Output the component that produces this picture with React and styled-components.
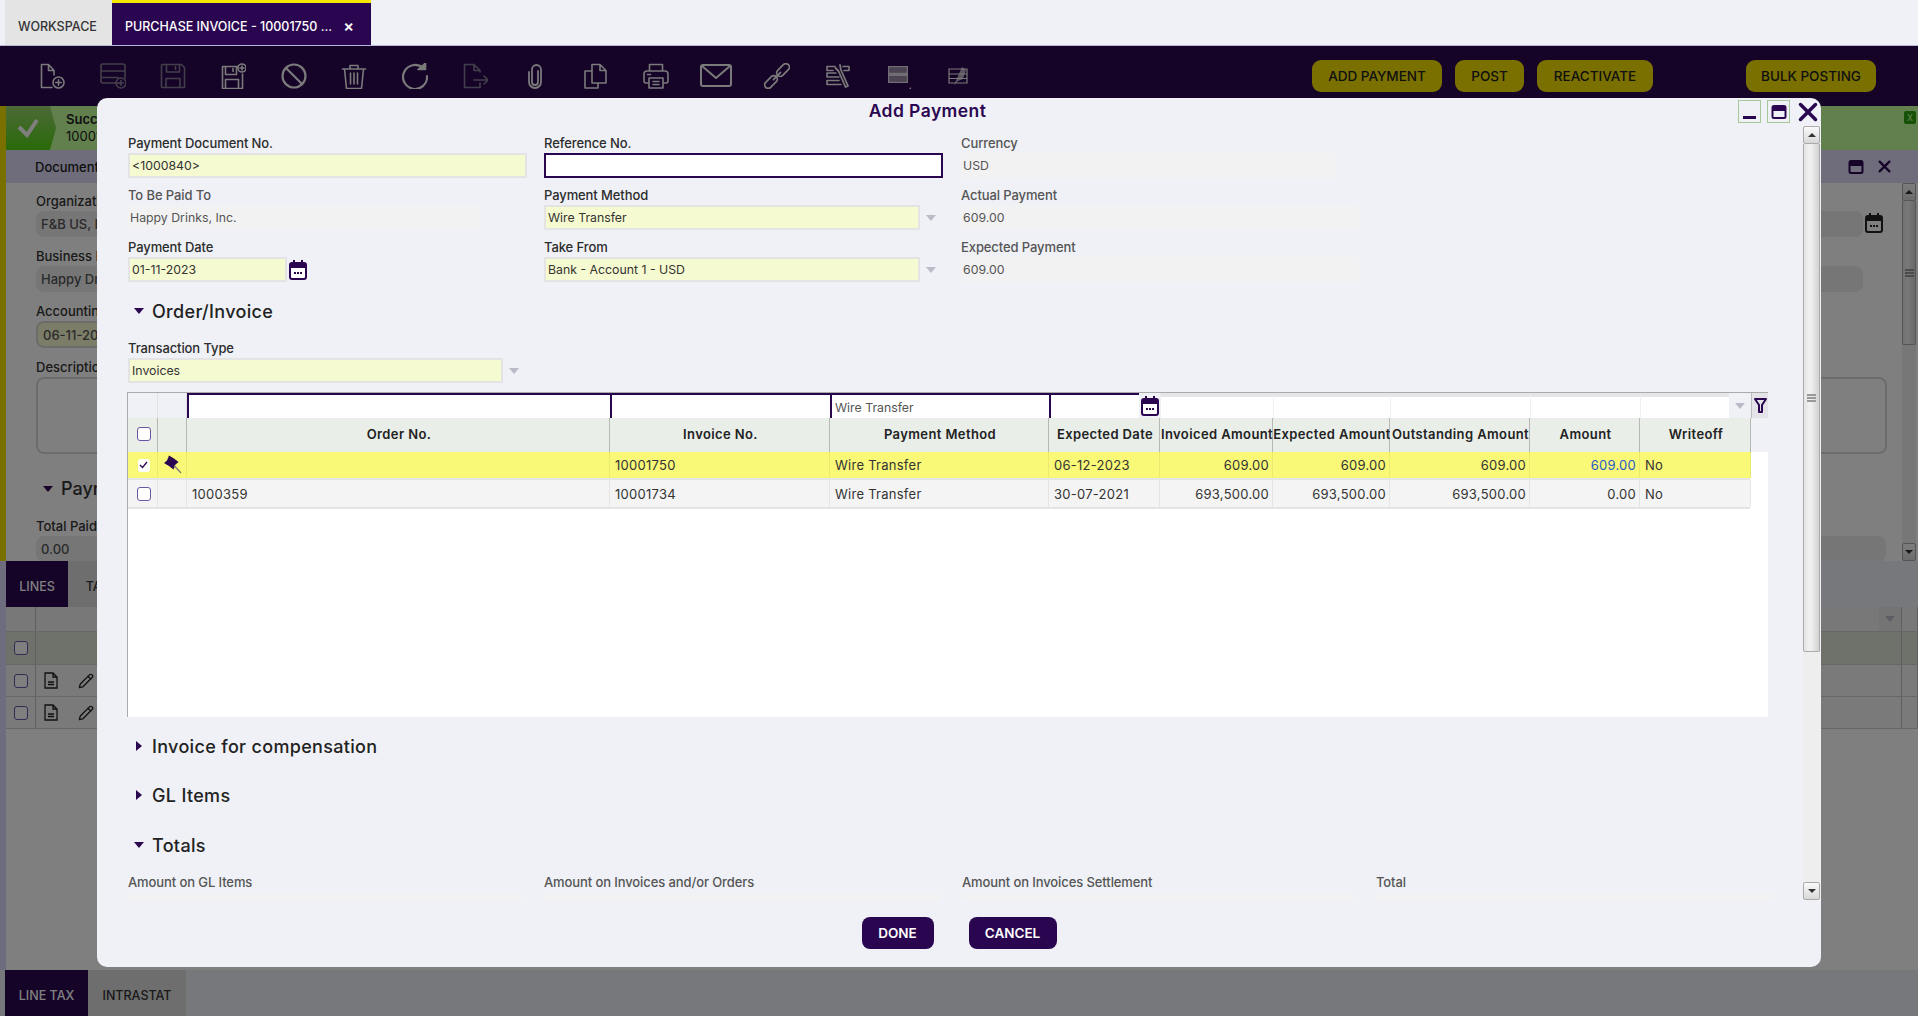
import React from 'react'
import styled, { createGlobalStyle } from 'styled-components'
import { Pencil } from 'lucide-react'

const GlobalStyle = createGlobalStyle`
    html, body {
        margin: 0;
        padding: 0;
        background: #eff1f6;
    }
    * {
        box-sizing: border-box;
    }
    body {
        font-family: Inter, "Noto Sans", "Liberation Sans", sans-serif;
        font-size: 13px;
        color: #333;
    }
`

const PURPLE = '#2b0650'
const GRID_COLS = '30px 29px 423px 220px 219px 111px 113px 117px 140px 110px 111px'
const FILTER_COLS = '30px 29px 423px 220px 219px 90px 21px 113px 117px 140px 110px 89px 22px 17px'

const Shell = styled.div`
    position: relative;
    width: 1918px;
    height: 1016px;
    overflow: hidden;
    display: flex;
    flex-direction: column;
`
const TabBar = styled.div`
    height: 46px;
    padding-left: 5px;
    display: flex;
    border-bottom: 1px solid #b9b7d6;
`
const TopTab = styled.div`
    height: 45px;
    display: flex;
    align-items: center;
    font-size: 12.5px;
    font-weight: 500;
    white-space: nowrap;
    padding: ${p => (p.$active ? '4px' : '7px')} 0 0 13px;
    width: ${p => (p.$active ? '259px' : '107px')};
    background: ${p => (p.$active ? PURPLE : '#e4e4e4')};
    color: ${p => (p.$active ? '#fff' : '#333')};
    border-top: ${p => (p.$active ? '3px solid #f5e700' : 'none')};
`
const TabClose = styled.span`
    margin-left: auto;
    padding-right: 17px;
    font-size: 16px;
    font-weight: 600;
`
const Dimmed = styled.div`
    position: relative;
    flex: 1;
    display: flex;
    flex-direction: column;
    min-height: 0;
`
const Overlay = styled.div`
    position: absolute;
    inset: 0;
    background: rgba(0, 0, 0, 0.5);
`
const Toolbar = styled.div`
    height: 60px;
    background: ${PURPLE};
    padding: 0 42px 0 22px;
    display: flex;
    align-items: center;
`
const ToolCell = styled.div`
    width: 60.4px;
    display: flex;
    justify-content: center;
    color: ${p => (p.$off ? '#857f96' : '#f4f4f4')};
`
const ToolGroup = styled.div`
    margin-left: auto;
    display: flex;
    gap: 13px;
`
const ActionBtn = styled.div`
    height: 32px;
    width: ${p => p.$w}px;
    border-radius: 9px;
    background: #f5e000;
    color: #222;
    font-size: 13.5px;
    font-weight: 500;
    display: flex;
    align-items: center;
    justify-content: center;
    margin-left: ${p => p.$gap || 0}px;
`

/* page behind the popup */
const TopPanel = styled.div`
    height: 455px;
    display: flex;
    background: #fff;
`
const Stripe = styled.div`
    width: 6px;
    background: #f5e000;
`
const PanelCol = styled.div`
    flex: 1;
    min-width: 0;
    display: flex;
    flex-direction: column;
`
const Message = styled.div`
    height: 44px;
    display: flex;
    background: #c4ff9c;
    font-size: 13px;
    line-height: 17px;
    color: #222;
`
const MessageIcon = styled.div`
    width: 50px;
    display: flex;
    align-items: center;
    justify-content: center;
    padding-right: 6px;
    background: linear-gradient(#9ad46f, #54d414);
    clip-path: polygon(0 0, 88% 0, 100% 50%, 88% 100%, 0 100%);
`
const MessageText = styled.div`
    padding: 5px 0 0 10px;
    b {
        font-weight: 600;
    }
`
const MessageClose = styled.div`
    margin: 5px 2px 0 auto;
    width: 12px;
    height: 13px;
    background: #2ea30c;
    border-radius: 2px;
    color: #c4ff9c;
    font-size: 11px;
    line-height: 13px;
    text-align: center;
`
const DocHeader = styled.div`
    height: 33px;
    padding: 0 27px 0 29px;
    background: #dfd9f8;
    display: flex;
    align-items: center;
    font-weight: 500;
    color: #222;
    gap: 13px;
`
const DocTitle = styled.span`
    flex: 1;
`
const DocIcon = styled.span`
    display: inline-flex;
    color: ${PURPLE};
`
const DocBody = styled.div`
    flex: 1;
    display: flex;
    min-height: 0;
    overflow: hidden;
`
const DocForm = styled.div`
    flex: 1;
    min-width: 0;
    padding: 9px 0 0 30px;
    font-weight: 500;
`
const DocLabel = styled.div`
    height: 19px;
    line-height: 19px;
`
const DocRow = styled.div`
    display: flex;
    align-items: flex-start;
`
const DocField = styled.div`
    height: ${p => p.$h || 26}px;
    margin-bottom: 10px;
    padding: 0 5px;
    display: flex;
    align-items: center;
    flex: none;
    width: ${p => p.$w}px;
    border-radius: 8px;
    color: #555;
    background: ${p => (p.$plain ? '#fff' : p.$req ? '#f6fad0' : '#ececec')};
    border: ${p => (p.$plain || p.$req ? '2px solid #d8d8d8' : 'none')};
`
const DocCal = styled.span`
    display: inline-flex;
    margin: 2px 0 0 2px;
    color: #222;
`
const DocSection = styled.div`
    font-size: 18px;
    margin: 24px 0 18px 7px;
    display: flex;
    align-items: center;
    gap: 0;
`
const Filler = styled.div`
    flex: 1;
    background: #fff;
    display: flex;
    flex-direction: column;
    border-left: 6px solid #dcd9ff;
`
const SubTabs = styled.div`
    height: 46px;
    flex: none;
    display: flex;
    background: #eff1f6;
`
const SubTab = styled.div`
    width: ${p => p.$w}px;
    margin-left: ${p => p.$ml || 0}px;
    padding-top: 5px;
    display: flex;
    align-items: center;
    justify-content: center;
    font-weight: 500;
    font-size: 12.5px;
    color: ${p => (p.$active ? '#fff' : '#333')};
    background: ${p => (p.$active ? PURPLE : '#dddddd')};
`
const BgRow = styled.div`
    height: ${p => p.$h}px;
    display: flex;
    background: ${p => p.$bg};
    border-bottom: 1px solid #cfcfcf;
`
const BgCell = styled.div`
    width: ${p => p.$w || 30}px;
    flex: ${p => (p.$grow ? 1 : 'none')};
    border-right: 1px solid #bfbfbf;
    display: flex;
    align-items: center;
    justify-content: ${p => (p.$start ? 'flex-start' : 'center')};
    gap: 20px;
    padding-left: ${p => (p.$start ? '8px' : '0')};
    color: ${PURPLE};
    font-weight: 600;
`
const BgArrow = styled.div`
    width: 22px;
    align-self: stretch;
    flex: none;
    background: #e8e8e8;
    display: flex;
    align-items: center;
    justify-content: center;
`
const BgFill = styled.div`
    flex: 1;
    text-align: center;
`

/* popup */
const Modal = styled.div`
    position: absolute;
    left: 97px;
    top: 98px;
    width: 1724px;
    height: 869px;
    background: #eff1f6;
    border-radius: 10px;
    display: flex;
    flex-direction: column;
`
const TitleBar = styled.div`
    height: 28px;
    flex: none;
    display: flex;
    padding: 2px 3px 0 26px;
`
const Title = styled.div`
    flex: 1;
    text-align: center;
    font-size: 17.5px;
    line-height: 22px;
    font-weight: 600;
    color: ${PURPLE};
    letter-spacing: 0.025em;
`
const WinBtn = styled.div`
    width: ${p => (p.$bare ? '20px' : '23px')};
    height: 23px;
    margin-left: ${p => (p.$bare ? '8px' : '6px')};
    border: ${p => (p.$bare ? 'none' : '1px solid #a5c79a')};
    color: ${PURPLE};
    display: flex;
    align-items: center;
    justify-content: center;
`
const Middle = styled.div`
    height: 774px;
    flex: none;
    display: flex;
`
const Content = styled.div`
    flex: 1;
    min-width: 0;
    overflow: hidden;
    padding: 9px 0 0 31px;
`
const FormGrid = styled.div`
    display: grid;
    grid-template-columns: 399px 400px 1fr;
    column-gap: 17px;
    row-gap: 9px;
`
const FieldBox = styled.div`
    display: flex;
    flex-direction: column;
    height: 43px;
    margin-top: ${p => p.$mt || 0}px;
`
const Label = styled.div`
    height: 18px;
    line-height: 16px;
    font-size: 13px;
    font-weight: 500;
    letter-spacing: -0.1px;
    color: ${p => (p.$muted ? '#555' : '#2c2c2c')};
    white-space: nowrap;
`
const InputRow = styled.div`
    display: flex;
    align-items: center;
`
const Field = styled.div`
    height: 25px;
    width: ${p => (p.$w ? `${p.$w}px` : '100%')};
    flex: none;
    padding: 0 2px;
    display: flex;
    align-items: center;
    font-size: 12.3px;
    white-space: nowrap;
    ${p =>
        p.$kind === 'focus'
            ? `background: #fff; border: 2px solid ${PURPLE};`
            : p.$kind === 'read'
            ? 'background: #f2f2f2; color: #555; padding-left: 2px;'
            : 'background: #f6fad0; border: 2px solid #e4e4e4; color: #333;'}
`
const SelectArrow = styled.span`
    width: 0;
    height: 0;
    margin-left: ${p => p.$ml ?? 6}px;
    border-left: 5px solid transparent;
    border-right: 5px solid transparent;
    border-top: 6px solid #b9bcc6;
`
const CalWrap = styled.span`
    margin-left: 2px;
    display: inline-flex;
    color: ${PURPLE};
`
const SectionHead = styled.div`
    height: 28px;
    display: flex;
    align-items: center;
    margin-top: ${p => p.$mt || 0}px;
    padding-left: 6px;
    font-size: 18px;
    font-weight: 500;
    color: #222;
    letter-spacing: 0.018em;
`
const Toggle = styled.span`
    width: 0;
    height: 0;
    flex: none;
    margin-right: ${p => (p.$open ? '8px' : '10px')};
    ${p =>
        p.$open
            ? `border-left: 5px solid transparent; border-right: 5px solid transparent; border-top: 6px solid ${PURPLE};`
            : `margin-left: 2px; border-top: 5px solid transparent; border-bottom: 5px solid transparent; border-left: 6px solid ${PURPLE};`}
`
const GridBox = styled.div`
    width: 1641px;
    height: 325px;
    margin: 9px 0 0 -1px;
    background: #fff;
    border-top: 1px solid #aaa;
    border-left: 1px solid #aaa;
`
const FilterRow = styled.div`
    height: 25px;
    display: grid;
    grid-template-columns: ${FILTER_COLS};
    background: #eff1f6;
`
const FilterCell = styled.div`
    background: #fff;
    padding: 1px 0 0 3px;
    display: flex;
    align-items: center;
    color: #555;
    font-size: 12.3px;
    border-top: ${p => (p.$on ? `2px solid ${PURPLE}` : '4px solid #e6e6ea')};
    border-left: ${p => (p.$on ? `2px solid ${PURPLE}` : '1px solid #eff1f6')};
`
const BlankCell = styled.div`
    background: #eff1f6;
    border-right: 1px solid #e2e2e2;
`
const FilterSide = styled.div`
    display: flex;
    align-items: center;
    justify-content: center;
    color: ${PURPLE};
`
const FilterBtn = styled.div`
    display: flex;
    align-items: center;
    justify-content: center;
    background: #e4e4e8;
    color: ${PURPLE};
    border-left: 1px solid #bbb;
`
const HeadWrap = styled.div`
    height: 34px;
    background: #eff1f6;
    display: grid;
    grid-template-columns: ${GRID_COLS};
`
const HeadCell = styled.div`
    background: #e9eee9;
    border-right: 1px solid #b5b8b5;
    padding: 0 0 2px 2px;
    display: flex;
    align-items: center;
    justify-content: center;
    font-size: 13px;
    font-weight: 600;
    color: #222;
    white-space: nowrap;
    letter-spacing: 0.03em;
`
const Row = styled.div`
    height: ${p => p.$h}px;
    display: grid;
    grid-template-columns: ${GRID_COLS};
    background: ${p => (p.$sel ? '#f9f877' : '#f4f4f4')};
    width: 1622px;
    border-bottom: 2px solid #e4e4e4;
`
const Cell = styled.div`
    border-right: 1px solid ${p => (p.$sel ? '#eaea70' : '#e4e4e4')};
    display: flex;
    align-items: center;
    justify-content: ${p => (p.$right ? 'flex-end' : p.$center ? 'center' : 'flex-start')};
    padding: 0 3px 0 5px;
    font-size: 13px;
    letter-spacing: 0.02em;
    color: ${p => p.$color || '#333'};
`
const Check = styled.span`
    width: ${p => (p.$on ? 12 : 14)}px;
    height: ${p => (p.$on ? 13 : 14)}px;
    border-radius: 3px;
    background: #fff;
    border: ${p => (p.$on ? 'none' : '1px solid #6a55a8')};
    display: inline-flex;
    align-items: center;
    justify-content: center;
    color: ${PURPLE};
`
const TotalsGrid = styled.div`
    display: grid;
    grid-template-columns: 394px 396px 392px 398px;
    column-gap: 22px;
    margin-top: 15px;
`
const TotalField = styled.div`
    height: 20px;
    margin-top: 2px;
    background: #f2f2f2;
`
const Scrollbar = styled.div`
    width: ${p => p.$w || 17}px;
    margin-right: ${p => p.$mr ?? 1}px;
    flex: none;
    display: flex;
    flex-direction: column;
    background: #eeeeee;
`
const ScrollBtn = styled.div`
    height: 18px;
    flex: none;
    border: 1px solid #aaa;
    border-radius: 2px;
    background: linear-gradient(#fafafa, #d8d8d8);
    display: flex;
    align-items: center;
    justify-content: center;
    margin-top: ${p => (p.$bottom ? 'auto' : 0)};
`
const ScrollTri = styled.span`
    width: 0;
    height: 0;
    border-left: 4px solid transparent;
    border-right: 4px solid transparent;
    ${p => (p.$down ? 'border-top: 4px solid #333;' : 'border-bottom: 4px solid #333;')}
`
const Thumb = styled.div`
    height: ${p => p.$h}px;
    flex: none;
    border: 1px solid #aaa;
    border-top: none;
    border-radius: 0 0 2px 2px;
    background: linear-gradient(90deg, #e4e4e4, #f2f2f2 40%, #d2d2d2);
    display: flex;
    flex-direction: column;
    gap: 1px;
    align-items: center;
    padding-top: ${p => p.$grip}px;
`
const Grip = styled.span`
    width: 9px;
    height: 2px;
    background: #999;
`
const Footer = styled.div`
    flex: 1;
    display: flex;
    justify-content: center;
    align-items: flex-start;
    gap: 35px;
    padding-top: 17px;
`
const DarkBtn = styled.div`
    height: 32px;
    width: ${p => p.$w}px;
    border-radius: 8px;
    background: ${PURPLE};
    color: #fff;
    font-size: 13.5px;
    font-weight: 600;
    display: flex;
    align-items: center;
    justify-content: center;
`

const Svg = ({ size = 26, children }) => (
    <svg width={size} height={size} viewBox="0 0 26 26" fill="none" stroke="currentColor" strokeWidth="1.6" strokeLinecap="round" strokeLinejoin="round">
        {children}
    </svg>
)

const Plus = ({ x, y, r }) => (
    <>
        <circle cx={x} cy={y} r={r} />
        <path d={`M${x - r / 2} ${y}h${r}M${x} ${y - r / 2}v${r}`} />
    </>
)

const TOOLS = [
    { key: 'new', icon: <Svg><path d="M15 12V7.5L9.5 1.5H2.5V24.5H13M9.5 1.5V7.5H15" /><Plus x={19.5} y={19.5} r={5.5} /></Svg> },
    { key: 'newline', off: true, icon: <Svg><path d="M19 20H3a2 2 0 0 1-2-2V3a2 2 0 0 1 2-2h20a2 2 0 0 1 2 2v12M1 8h24M1 14.5h17" /><Plus x={21} y={20} r={5} /></Svg> },
    { key: 'save', off: true, icon: <Svg><path d="M2.5 1.5h19l3 3v20h-22a1 1 0 0 1-1-1v-21a1 1 0 0 1 1-1zM6.5 1.5v7.5h13v-7.5M6 24.5v-9h14v9M15.5 3.5v3" /></Svg> },
    { key: 'savenew', icon: <Svg><path d="M18 3.5H2.5v22h20V11M5.5 3.5v8h11v-8M5.5 25.5v-9h13v9M13 5.5v3" /><Plus x={22} y={5} r={4} /></Svg> },
    { key: 'ban', icon: <Svg><circle cx="13" cy="13" r="11.5" strokeWidth="2.2" /><path d="M5 5l16 16" strokeWidth="2.2" /></Svg> },
    { key: 'trash', icon: <Svg><path d="M1.5 6h23M9 6V2.5h8V6M3.5 6l2 19.5h15l2-19.5M9.5 10v11M13 10v11M16.5 10v11" /></Svg> },
    { key: 'refresh', icon: <Svg><path d="M21 5A12 12 0 1 0 25 13" strokeWidth="2.2" /><path d="M16 6.5h7.5V0z" fill="currentColor" /></Svg> },
    { key: 'export', off: true, icon: <Svg><path d="M18 9V7.5L12 1.5H2.5V24.5H18V20M12 1.5V7.5H18M12 17h14M22 13l4 4-4 4" /></Svg> },
    { key: 'attach', icon: <Svg><path d="M7 9v10a6 6 0 0 0 12 0V6.5a4.5 4.5 0 0 0-9 0V19a3 3 0 0 0 6 0V8" strokeWidth="1.8" /></Svg> },
    { key: 'copy', icon: <Svg><path d="M9 8H2v17h13v-5M9 1.5h8l6 6v12.5H9zM17 1.5v6h6" /></Svg> },
    { key: 'print', icon: <Svg><path d="M6.5 8V1.5h13V8M6 20H3a2 2 0 0 1-2-2v-7a3 3 0 0 1 3-3h18a3 3 0 0 1 3 3v7a2 2 0 0 1-2 2h-3M6 15h14v10H6zM10 18.5h6M10 21.5h6M4.5 11.5h3" /></Svg> },
    { key: 'mail', icon: <svg width="32" height="26" viewBox="0 0 32 26" fill="none" stroke="currentColor" strokeWidth="2" strokeLinejoin="round"><rect x="1" y="2" width="30" height="21" rx="2" /><path d="M2 3l14 12L30 3" /></svg> },
    { key: 'link', icon: (
        <Svg>
            <g transform="rotate(-45 13 13)" strokeWidth="1.8">
                <rect x="-3" y="9.5" width="15" height="7" rx="3.5" />
                <rect x="14" y="9.5" width="15" height="7" rx="3.5" />
                <path d="M8 13h10" />
            </g>
        </Svg>
    ) },
    { key: 'tools', icon: <Svg><path d="M3 3.5h8M3 7.5h6M3 10h9M3 14h12M3 17.5h12M3 21.5h14M3 3.5v4M3 10v4M3 17.5v4M19 3.5h6v4h-5" /><path d="M16 2l1 5 7 16-2.5 1-7-16-3-3" strokeWidth="1.8" /></Svg> },
    { key: 'rows', icon: <svg width="26" height="26" viewBox="0 0 26 26" fill="currentColor"><path d="M3 3h20v17H3zM4.5 4.5v5h17v-5zM4.5 13v5.5h17V13z" fillRule="evenodd" opacity="0.9" /><path d="M4.5 4.5h17v5h-17zM4.5 13h17v5.5h-17z" opacity="0.55" /><path d="M24 26h2v-2z" /></svg> },
    { key: 'slash', icon: <svg width="24" height="24" viewBox="0 0 24 24" fill="none" stroke="currentColor" strokeWidth="1.2"><path d="M3 5h18v14H3zM3 10h18M3 14.5h18" /><path d="M16 3l-8 18 4-4 5-2 3-9z" fill="currentColor" stroke="none" opacity="0.7" /></svg> },
]

const Calendar = ({ size = 20 }) => (
    <svg width={size * 0.9} height={size} viewBox="0 0 18 20" fill="none">
        <rect x="1" y="3" width="16" height="16" rx="2" fill="#fff" stroke="currentColor" strokeWidth="2" />
        <path d="M1 3h16v5H1z M4 0h2v3H4z M12 0h2v3h-2z" fill="currentColor" />
        <path d="M5 12h2v2H5zM8 12h2v2H8zM11 12h2v2h-2z" fill="currentColor" />
    </svg>
)

const Funnel = () => (
    <svg width="13" height="15" viewBox="0 0 13 15" fill="none" stroke="currentColor" strokeWidth="2" strokeLinejoin="round">
        <path d="M1 1h11L8 7v7H5V7z" />
    </svg>
)

const Pin = () => (
    <svg width="20" height="20" viewBox="0 0 20 20" fill="none">
        <path d="M6 0.5L11 3.5L15.5 7L12.5 9.5L10.5 14.5L6 11L1 8L4 5.5Z" fill={PURPLE} />
        <path d="M11 10.5l7 7.5" stroke="#777" strokeWidth="1.2" />
    </svg>
)

const FileIcon = () => (
    <svg width="14" height="17" viewBox="0 0 14 17" fill="none" stroke="#222" strokeWidth="1.3">
        <path d="M1 1h8l4 4v11H1zM9 1v4h4M4 10h6M4 12.5h6" />
    </svg>
)

const Minimize = () => <svg width="18" height="18" viewBox="0 0 18 18"><rect x="2" y="13" width="13" height="3" fill="currentColor" /></svg>
const Maximize = () => (
    <svg width="18" height="18" viewBox="0 0 18 18" fill="none">
        <rect x="2.5" y="3" width="13" height="12" rx="1.5" stroke="currentColor" strokeWidth="2" />
        <rect x="2.5" y="3" width="13" height="5" fill="currentColor" />
    </svg>
)
const CloseX = ({ size = 20 }) => (
    <svg width={size} height={size} viewBox="0 0 20 20" stroke="currentColor" strokeWidth="3.5" strokeLinecap="round">
        <path d="M2.5 2.5l15 15M17.5 2.5l-15 15" />
    </svg>
)

const COLUMNS = ['Order No.', 'Invoice No.', 'Payment Method', 'Expected Date', 'Invoiced Amount', 'Expected Amount', 'Outstanding Amount', 'Amount', 'Writeoff']

const ROWS = [
    { id: 1, sel: true, h: 28, order: '', invoice: '10001750', date: '06-12-2023', invoiced: '609.00', expected: '609.00', outstanding: '609.00', amount: '609.00' },
    { id: 2, sel: false, h: 29, order: '1000359', invoice: '10001734', date: '30-07-2021', invoiced: '693,500.00', expected: '693,500.00', outstanding: '693,500.00', amount: '0.00' },
]

const PaymentGrid = () => (
    <GridBox>
        <FilterRow>
            <BlankCell />
            <BlankCell />
            <FilterCell $on />
            <FilterCell $on />
            <FilterCell $on>Wire Transfer</FilterCell>
            <FilterCell $on />
            <FilterSide><Calendar /></FilterSide>
            <FilterCell />
            <FilterCell />
            <FilterCell />
            <FilterCell />
            <FilterCell />
            <FilterSide><SelectArrow $ml={0} /></FilterSide>
            <FilterBtn><Funnel /></FilterBtn>
        </FilterRow>
        <HeadWrap>
            <HeadCell><Check /></HeadCell>
            <HeadCell />
            {COLUMNS.map(c => <HeadCell key={c}>{c}</HeadCell>)}
        </HeadWrap>
        {ROWS.map(r => (
            <Row key={r.id} $sel={r.sel} $h={r.h}>
                <Cell $sel={r.sel} $center>
                    <Check $on={r.sel}>
                        {r.sel && (
                            <svg width="9" height="8" viewBox="0 0 9 8" fill="none" stroke="currentColor" strokeWidth="1.3"><path d="M1 4l2.5 2.5L8 1" /></svg>
                        )}
                    </Check>
                </Cell>
                <Cell $sel={r.sel} $center>{r.sel && <Pin />}</Cell>
                <Cell $sel={r.sel}>{r.order}</Cell>
                <Cell $sel={r.sel}>{r.invoice}</Cell>
                <Cell $sel={r.sel}>Wire Transfer</Cell>
                <Cell $sel={r.sel}>{r.date}</Cell>
                <Cell $sel={r.sel} $right>{r.invoiced}</Cell>
                <Cell $sel={r.sel} $right>{r.expected}</Cell>
                <Cell $sel={r.sel} $right>{r.outstanding}</Cell>
                <Cell $sel={r.sel} $right $color={r.sel ? '#2a5bc7' : undefined}>{r.amount}</Cell>
                <Cell $sel={r.sel}>No</Cell>
            </Row>
        ))}
    </GridBox>
)

const PaymentForm = () => (
    <FormGrid>
        <FieldBox>
            <Label>Payment Document No.</Label>
            <Field>&lt;1000840&gt;</Field>
        </FieldBox>
        <FieldBox>
            <Label>Reference No.</Label>
            <Field $kind="focus" $w={399} />
        </FieldBox>
        <FieldBox>
            <Label $muted>Currency</Label>
            <Field $kind="read" $w={374}>USD</Field>
        </FieldBox>
        <FieldBox>
            <Label $muted>To Be Paid To</Label>
            <Field $kind="read" $w={352}>Happy Drinks, Inc.</Field>
        </FieldBox>
        <FieldBox>
            <Label>Payment Method</Label>
            <InputRow>
                <Field $w={376}>Wire Transfer</Field>
                <SelectArrow />
            </InputRow>
        </FieldBox>
        <FieldBox>
            <Label $muted>Actual Payment</Label>
            <Field $kind="read" $w={398}>609.00</Field>
        </FieldBox>
        <FieldBox>
            <Label>Payment Date</Label>
            <InputRow>
                <Field $w={159}>01-11-2023</Field>
                <CalWrap><Calendar /></CalWrap>
            </InputRow>
        </FieldBox>
        <FieldBox>
            <Label>Take From</Label>
            <InputRow>
                <Field $w={376}>Bank - Account 1 - USD</Field>
                <SelectArrow />
            </InputRow>
        </FieldBox>
        <FieldBox>
            <Label $muted>Expected Payment</Label>
            <Field $kind="read" $w={398}>609.00</Field>
        </FieldBox>
    </FormGrid>
)

const PaymentPopup = () => (
    <Modal>
        <TitleBar>
            <Title>Add Payment</Title>
            <WinBtn><Minimize /></WinBtn>
            <WinBtn><Maximize /></WinBtn>
            <WinBtn $bare><CloseX /></WinBtn>
        </TitleBar>
        <Middle>
            <Content>
                <PaymentForm />
                <SectionHead $mt={15}><Toggle $open />Order/Invoice</SectionHead>
                <FieldBox $mt={15}>
                    <Label>Transaction Type</Label>
                    <InputRow>
                        <Field $w={375}>Invoices</Field>
                        <SelectArrow />
                    </InputRow>
                </FieldBox>
                <PaymentGrid />
                <SectionHead $mt={15}><Toggle />Invoice for compensation</SectionHead>
                <SectionHead $mt={21}><Toggle />GL Items</SectionHead>
                <SectionHead $mt={22}><Toggle $open />Totals</SectionHead>
                <TotalsGrid>
                    <div><Label $muted>Amount on GL Items</Label><TotalField /></div>
                    <div><Label $muted>Amount on Invoices and/or Orders</Label><TotalField /></div>
                    <div><Label $muted>Amount on Invoices Settlement</Label><TotalField /></div>
                    <div><Label $muted>Total</Label><TotalField /></div>
                </TotalsGrid>
            </Content>
            <Scrollbar>
                <ScrollBtn><ScrollTri /></ScrollBtn>
                <Thumb $h={508} $grip={250}><Grip /><Grip /><Grip /></Thumb>
                <ScrollBtn $bottom><ScrollTri $down /></ScrollBtn>
            </Scrollbar>
        </Middle>
        <Footer>
            <DarkBtn $w={72}>DONE</DarkBtn>
            <DarkBtn $w={88}>CANCEL</DarkBtn>
        </Footer>
    </Modal>
)

const Backdrop = () => (
    <>
        <TopPanel>
            <Stripe />
            <PanelCol>
                <Message>
                    <MessageIcon>
                        <svg width="22" height="20" viewBox="0 0 22 20" fill="none" stroke="#ffffff" strokeWidth="4"><path d="M2 9l8 8L20 2" /></svg>
                    </MessageIcon>
                    <MessageText><b>Success</b><br />10001750</MessageText>
                    <MessageClose>x</MessageClose>
                </Message>
                <DocHeader>
                    <DocTitle>Document</DocTitle>
                    <DocIcon><Maximize /></DocIcon>
                    <DocIcon><CloseX size={13} /></DocIcon>
                </DocHeader>
                <DocBody>
                    <DocForm>
                        <DocLabel>Organization</DocLabel>
                        <DocRow>
                            <DocField $w={1827}>F&amp;B US, Inc.</DocField>
                            <DocCal><Calendar /></DocCal>
                        </DocRow>
                        <DocLabel>Business Partner</DocLabel>
                        <DocField $w={1827}>Happy Drinks, Inc.</DocField>
                        <DocLabel>Accounting Date</DocLabel>
                        <DocField $req $w={300} $h={27}>06-11-2023</DocField>
                        <DocLabel>Description</DocLabel>
                        <DocField $plain $w={1851} $h={77} />
                        <DocSection><Toggle $open />Payment</DocSection>
                        <DocLabel>Total Paid</DocLabel>
                        <DocField $w={1850} $h={26}>0.00</DocField>
                    </DocForm>
                    <Scrollbar $w={14} $mr={2}>
                        <ScrollBtn><ScrollTri /></ScrollBtn>
                        <Thumb $h={144} $grip={68}><Grip /><Grip /><Grip /></Thumb>
                        <ScrollBtn $bottom><ScrollTri $down /></ScrollBtn>
                    </Scrollbar>
                </DocBody>
            </PanelCol>
        </TopPanel>
        <Filler>
            <SubTabs>
                <SubTab $active $w={62}>LINES</SubTab>
                <SubTab $w={60}>TAX</SubTab>
            </SubTabs>
            <BgRow $h={25} $bg="#f0f0f0">
                <BgCell />
                <BgCell $grow $w={1850}><BgFill>2</BgFill><BgArrow><SelectArrow $ml={0} /></BgArrow></BgCell>
                <BgCell $w={16} />
            </BgRow>
            <BgRow $h={33} $bg="#dee2d6">
                <BgCell><Check /></BgCell>
                <BgCell $grow />
                <BgCell $w={16} />
            </BgRow>
            <BgRow $h={32} $bg="#f4f4f4">
                <BgCell><Check /></BgCell>
                <BgCell $grow $start><FileIcon /><Pencil size={16} color="#222" /></BgCell>
                <BgCell $w={16} />
            </BgRow>
            <BgRow $h={32} $bg="#f4f4f4">
                <BgCell><Check /></BgCell>
                <BgCell $grow $start><FileIcon /><Pencil size={16} color="#222" /></BgCell>
                <BgCell $w={16} />
            </BgRow>
        </Filler>
        <SubTabs>
            <SubTab $active $w={83} $ml={5}>LINE TAX</SubTab>
            <SubTab $w={98}>INTRASTAT</SubTab>
        </SubTabs>
    </>
)

const App = () => (
    <>
        <GlobalStyle />
        <Shell>
            <TabBar>
                <TopTab>WORKSPACE</TopTab>
                <TopTab $active>PURCHASE INVOICE - 10001750 ...<TabClose>×</TabClose></TopTab>
            </TabBar>
            <Dimmed>
                <Toolbar>
                    {TOOLS.map(t => <ToolCell key={t.key} $off={t.off}>{t.icon}</ToolCell>)}
                    <ToolGroup>
                        <ActionBtn $w={130}>ADD PAYMENT</ActionBtn>
                        <ActionBtn $w={69}>POST</ActionBtn>
                        <ActionBtn $w={116}>REACTIVATE</ActionBtn>
                        <ActionBtn $w={130} $gap={80}>BULK POSTING</ActionBtn>
                    </ToolGroup>
                </Toolbar>
                <Backdrop />
                <Overlay />
            </Dimmed>
            <PaymentPopup />
        </Shell>
    </>
)

export default App
